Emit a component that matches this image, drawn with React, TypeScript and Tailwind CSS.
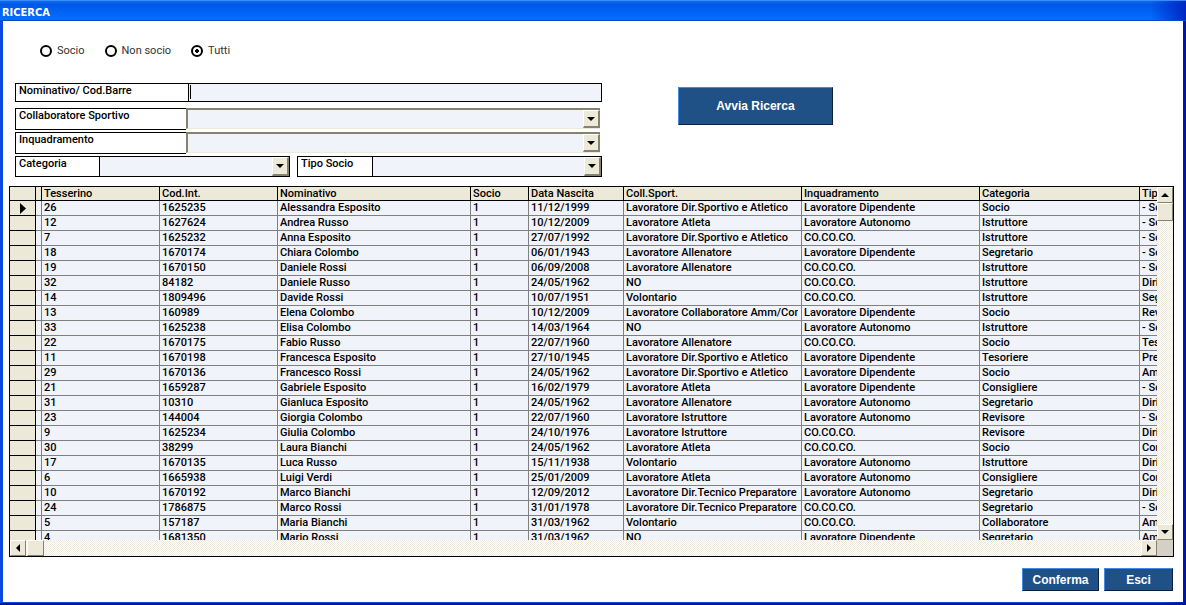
import React, { useState } from 'react';
import clsx from 'clsx';

interface Row {
  tessera: string;
  codice: string;
  nominativo: string;
  nascita: string;
  collaboratore: string;
  inquadramento: string;
  categoria: string;
  tipo: string;
}

const DIP = 'Lavoratore Dipendente';
const AUT = 'Lavoratore Autonomo';
const COCO = 'CO.CO.CO.';
const DIR_SPORT = 'Lavoratore Dir.Sportivo e Atletico';
const DIR_TEC = 'Lavoratore Dir.Tecnico Preparatore';

const data: string[][] = [
  ['26', '1625235', 'Alessandra Esposito', '11/12/1999', DIR_SPORT, DIP, 'Socio', '- Socio'],
  ['12', '1627624', 'Andrea Russo', '10/12/2009', 'Lavoratore Atleta', AUT, 'Istruttore', '- Socio'],
  ['7', '1625232', 'Anna Esposito', '27/07/1992', DIR_SPORT, COCO, 'Istruttore', '- Socio'],
  ['18', '1670174', 'Chiara Colombo', '06/01/1943', 'Lavoratore Allenatore', DIP, 'Segretario', '- Socio'],
  ['19', '1670150', 'Daniele Rossi', '06/09/2008', 'Lavoratore Allenatore', COCO, 'Istruttore', '- Socio'],
  ['32', '84182', 'Daniele Russo', '24/05/1962', 'NO', COCO, 'Istruttore', 'Dirigente'],
  ['14', '1809496', 'Davide Rossi', '10/07/1951', 'Volontario', COCO, 'Istruttore', 'Segretario'],
  ['13', '160989', 'Elena Colombo', '10/12/2009', 'Lavoratore Collaboratore Amm/Cont', DIP, 'Socio', 'Revisore'],
  ['33', '1625238', 'Elisa Colombo', '14/03/1964', 'NO', AUT, 'Istruttore', '- Socio'],
  ['22', '1670175', 'Fabio Russo', '22/07/1960', 'Lavoratore Allenatore', COCO, 'Socio', 'Tesoriere'],
  ['11', '1670198', 'Francesca Esposito', '27/10/1945', DIR_SPORT, DIP, 'Tesoriere', 'Presidente'],
  ['29', '1670136', 'Francesco Rossi', '24/05/1962', DIR_SPORT, DIP, 'Socio', 'Amministratore'],
  ['21', '1659287', 'Gabriele Esposito', '16/02/1979', 'Lavoratore Atleta', DIP, 'Consigliere', '- Socio'],
  ['31', '10310', 'Gianluca Esposito', '24/05/1962', 'Lavoratore Allenatore', AUT, 'Segretario', 'Dirigente'],
  ['23', '144004', 'Giorgia Colombo', '22/07/1960', 'Lavoratore Istruttore', AUT, 'Revisore', '- Socio'],
  ['9', '1625234', 'Giulia Colombo', '24/10/1976', 'Lavoratore Istruttore', COCO, 'Revisore', 'Dirigente'],
  ['30', '38299', 'Laura Bianchi', '24/05/1962', 'Lavoratore Atleta', COCO, 'Socio', 'Consigliere'],
  ['17', '1670135', 'Luca Russo', '15/11/1938', 'Volontario', AUT, 'Istruttore', 'Dirigente'],
  ['6', '1665938', 'Luigi Verdi', '25/01/2009', 'Lavoratore Atleta', AUT, 'Consigliere', 'Consigliere'],
  ['10', '1670192', 'Marco Bianchi', '12/09/2012', DIR_TEC, AUT, 'Segretario', 'Dirigente'],
  ['24', '1786875', 'Marco Rossi', '31/01/1978', DIR_TEC, COCO, 'Segretario', '- Socio'],
  ['5', '157187', 'Maria Bianchi', '31/03/1962', 'Volontario', COCO, 'Collaboratore', 'Amministratore'],
  ['4', '1681350', 'Mario Rossi', '31/03/1962', 'NO', DIP, 'Segretario', 'Amministratore'],
];

const rows: Row[] = data.map(([tessera, codice, nominativo, nascita, collaboratore, inquadramento, categoria, tipo]) => ({
  tessera, codice, nominativo, nascita, collaboratore, inquadramento, categoria, tipo,
}));

const columns = [
  { title: 'Tesserino', width: 'w-[118px]' },
  { title: 'Cod.Int.', width: 'w-[118px]' },
  { title: 'Nominativo', width: 'w-[193px]' },
  { title: 'Socio', width: 'w-[58px]' },
  { title: 'Data Nascita', width: 'w-[95px]' },
  { title: 'Coll.Sport.', width: 'w-[178px]' },
  { title: 'Inquadramento', width: 'w-[178px]' },
  { title: 'Categoria', width: 'w-[160px]' },
  { title: 'Tipo Socio', width: 'w-[120px]' },
];

const raised = 'border border-t-white border-l-white border-r-[#85826f] border-b-[#85826f] bg-[#ece9d8]';
const track = 'bg-[repeating-conic-gradient(#fffefa_0_25%,#efecdf_0_50%)] bg-[length:2px_2px]';

const Arrow: React.FC<{ dir: 'up' | 'down' | 'left' | 'right' }> = ({ dir }) => {
  const points = {
    up: '0,6 8,6 4,2',
    down: '0,2 8,2 4,6',
    left: '6,0 6,8 2,4',
    right: '2,0 2,8 6,4',
  };
  return (
    <svg width="8" height="8" viewBox="0 0 8 8" className="shrink-0" aria-hidden="true">
      <polygon points={points[dir]} fill="#000" />
    </svg>
  );
};

const ScrollButton: React.FC<{ dir: 'up' | 'down' | 'left' | 'right'; label: string }> = ({ dir, label }) => (
  <button type="button" aria-label={label} className={clsx('flex h-4 w-4 shrink-0 items-center justify-center', raised)}>
    <Arrow dir={dir} />
  </button>
);

const Combo: React.FC<{ id: string; boxed?: boolean }> = ({ id, boxed }) => (
  <div
    className={clsx(
      'relative flex min-w-0 flex-1',
      boxed
        ? 'border-l border-black'
        : 'mb-px border-t-2 border-b border-l-2 border-t-[#85826f] border-b-[#ece9d8] border-l-[#85826f]'
    )}
  >
    <select id={id} className="w-full appearance-none bg-[#f0f3fa] px-1 outline-none">
      <option value=""></option>
    </select>
    <span className="pointer-events-none absolute inset-y-0 right-0 flex w-[17px] items-center justify-center border-t border-r-2 border-b-2 border-l border-t-white border-r-[#85826f] border-b-[#85826f] border-l-white bg-[#ece9d8]">
      <Arrow dir="down" />
    </span>
  </div>
);

const CommandButton: React.FC<{ className: string; children: React.ReactNode }> = ({ className, children }) => (
  <button
    type="button"
    className={clsx(
      "border border-t-[#3f8be8] border-r-[#0b1f3c] border-b-[#0b1f3c] border-l-[#3f8be8] bg-[#1f5086] font-['Liberation_Sans',sans-serif] text-xs font-bold text-white",
      className
    )}
  >
    {children}
  </button>
);

const App: React.FC = () => {
  const [filtro, setFiltro] = useState('Tutti');
  const [nome, setNome] = useState('');
  const [selected, setSelected] = useState(0);

  return (
    <div className="flex h-screen flex-col border-b-2 border-b-[#0012a0] bg-[linear-gradient(to_right,#0a48e0_98%,#0012a0)] font-['Roboto','Liberation_Sans',sans-serif] text-[11px] leading-[13px] font-medium text-black">
      <header className="flex h-[21px] shrink-0 items-center border-t border-b border-t-[#3c8cf4] border-b-[#0a4cc0] bg-[linear-gradient(to_right,transparent_97%,#0226c4),linear-gradient(#0a6cf5,#0058e6_20%,#0068fb_75%,#0070ff)] pt-1 pl-[2px]">
        <h1 className="font-['DejaVu_Sans_Condensed','DejaVu_Sans',sans-serif] text-[11px] font-bold text-white">RICERCA</h1>
      </header>

      <main className="mr-[3px] mb-px flex min-h-0 flex-1 flex-col border-l-[3px] border-[#0a48e0] bg-white pr-[9px] pb-[11px] pl-[6px]">
        <div role="radiogroup" aria-label="Filtro soci" className="flex h-[62px] shrink-0 items-center gap-5 pb-1 pl-[31px] font-normal text-[#333]">
          {['Socio', 'Non socio', 'Tutti'].map((v) => (
            <label key={v} className="flex items-center gap-[5px]">
              <input
                type="radio"
                name="filtro"
                checked={filtro === v}
                onChange={() => setFiltro(v)}
                className="mt-px h-3 w-3 appearance-none rounded-full border-2 border-black checked:bg-[radial-gradient(#000_0_2px,#fff_2px)]"
              />
              {v}
            </label>
          ))}
        </div>

        <div className="flex shrink-0 items-start gap-[76px] pl-[6px]">
          <div className="flex w-full max-w-[587px] flex-col gap-[2px]">
            <div className="mb-1 flex h-[19px] border border-black">
              <label htmlFor="nominativo" className="w-[173px] shrink-0 border-r border-black pl-[3px]">Nominativo/ Cod.Barre</label>
              <div className="flex flex-1 bg-[#f0f3fa] pl-px">
                <span className="mt-px h-[14px] w-px bg-black"></span>
                <input
                  id="nominativo"
                  type="text"
                  value={nome}
                  onChange={(e) => setNome(e.target.value)}
                  className="min-w-0 flex-1 bg-transparent px-px outline-none"
                />
              </div>
            </div>
            <div className="mr-[2px] flex h-[22px]">
              <label htmlFor="collaboratore" className="w-[171px] shrink-0 border border-r-0 border-black pl-[3px]">Collaboratore Sportivo</label>
              <Combo id="collaboratore" />
            </div>
            <div className="mr-[2px] flex h-[22px]">
              <label htmlFor="inquadramento" className="w-[171px] shrink-0 border border-r-0 border-black pl-[3px]">Inquadramento</label>
              <Combo id="inquadramento" />
            </div>
            <div className="flex h-[21px] gap-[7px]">
              <div className="flex w-[275px] border border-black">
                <label htmlFor="categoria" className="w-[83px] shrink-0 pl-[3px]">Categoria</label>
                <Combo id="categoria" boxed />
              </div>
              <div className="flex flex-1 border border-black">
                <label htmlFor="tipo" className="w-[74px] shrink-0 pl-[3px]">Tipo Socio</label>
                <Combo id="tipo" boxed />
              </div>
            </div>
          </div>
          <CommandButton className="mt-1 h-[38px] w-[155px] shrink-0">Avvia Ricerca</CommandButton>
        </div>

        <div className="mt-[9px] flex min-h-0 flex-1 flex-col border border-black">
          <div className="flex min-h-0 flex-1">
            <div className="min-w-0 flex-1 overflow-hidden bg-[#f0f3fa]">
              <table className="w-[1250px] table-fixed border-separate border-spacing-0 text-left">
                <colgroup>
                  <col className="w-[26px]" />
                  <col className="w-[6px]" />
                  {columns.map((c) => (
                    <col key={c.title} className={c.width} />
                  ))}
                </colgroup>
                <thead className="bg-[#ece9d8]">
                  <tr>
                    <th className="h-[14px] border-r border-b border-black p-0"></th>
                    <th className="border-r border-b border-black p-0"></th>
                    {columns.map((c) => (
                      <th key={c.title} scope="col" className="border-r border-b border-black p-0 pl-[2px] font-medium">{c.title}</th>
                    ))}
                  </tr>
                </thead>
                <tbody>
                  {rows.map((r, i) => (
                    <tr key={r.tessera} onClick={() => setSelected(i)}>
                      <td className="h-[15px] border-r border-b border-black bg-[#ece9d8] p-0">
                        {i === selected && (
                          <svg width="6" height="11" viewBox="0 0 6 11" className="ml-[10px]" aria-hidden="true">
                            <polygon points="0,0 6,5.5 0,11" fill="#000" />
                          </svg>
                        )}
                      </td>
                      <td className="border-r border-b border-[#808080] p-0"></td>
                      {[r.tessera, r.codice, r.nominativo, '1', r.nascita, r.collaboratore, r.inquadramento, r.categoria, r.tipo].map((v, j) => (
                        <td key={j} className="border-r border-b border-[#808080] p-0 pr-[3px] pl-[2px]">
                          <div className="h-[14px] overflow-hidden whitespace-nowrap">{v}</div>
                        </td>
                      ))}
                    </tr>
                  ))}
                </tbody>
              </table>
            </div>
            <div className={clsx('flex w-4 shrink-0 flex-col', track)}>
              <ScrollButton dir="up" label="Scorri su" />
              <div className={clsx('h-[18px]', raised)}></div>
              <div className="flex-1"></div>
              <ScrollButton dir="down" label="Scorri giù" />
            </div>
          </div>
          <div className={clsx('flex h-4 shrink-0', track)}>
            <ScrollButton dir="left" label="Scorri a sinistra" />
            <div className={clsx('ml-px w-[17px]', raised)}></div>
            <div className="flex-1"></div>
            <ScrollButton dir="right" label="Scorri a destra" />
            <div className="w-4 bg-[#d4d0c8]"></div>
          </div>
        </div>

        <footer className="mt-[11px] mr-px flex shrink-0 justify-end gap-[5px]">
          <CommandButton className="h-[23px] w-[77px]">Conferma</CommandButton>
          <CommandButton className="h-[23px] w-[69px]">Esci</CommandButton>
        </footer>
      </main>
    </div>
  );
};

export default App;
